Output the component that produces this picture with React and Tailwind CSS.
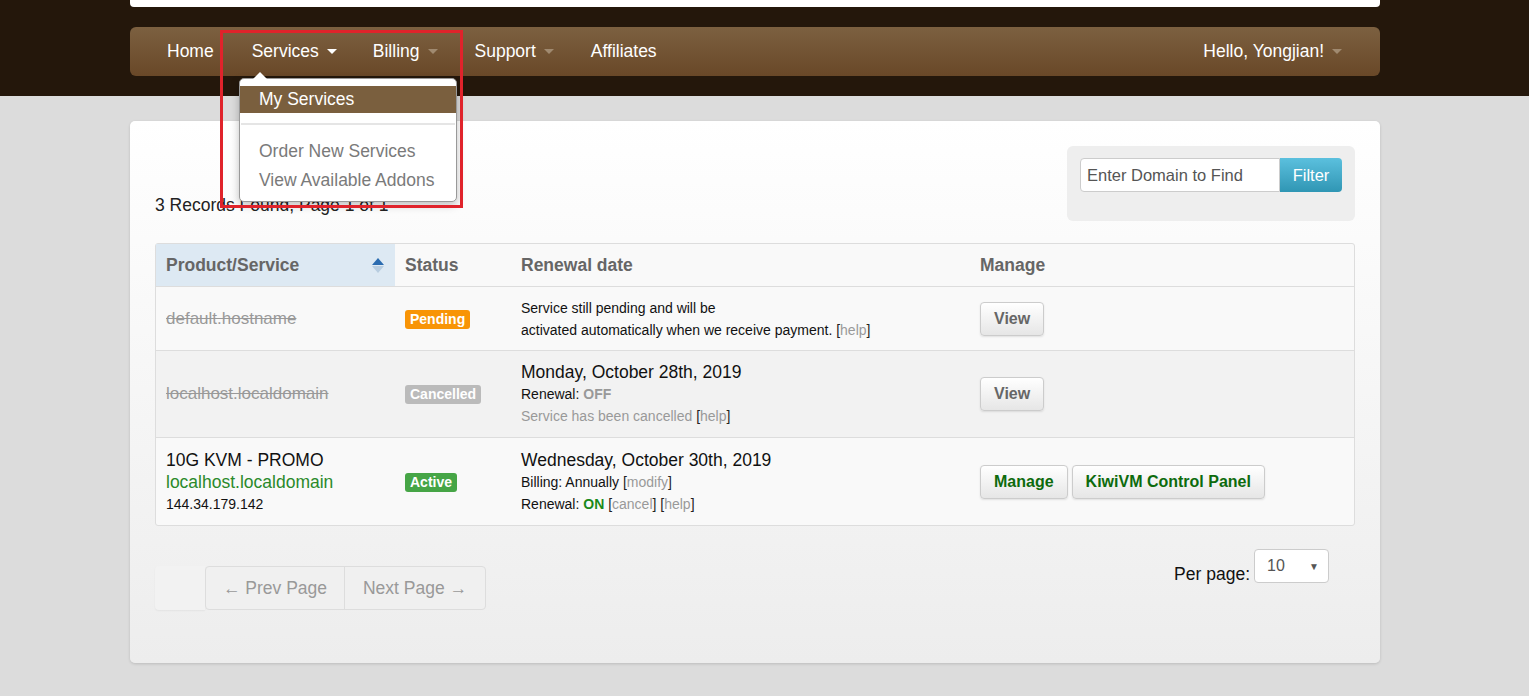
import React from "react";

const Caret = ({ className = "" }) => (
  <span className={`inline-block ml-[8px] align-middle w-0 h-0 border-l-[5px] border-r-[5px] border-t-[5px] border-l-transparent border-r-transparent ${className}`} />
);

function NavBar() {
  return (
    <div className="relative ml-[130px] w-[1250px] h-[49px] rounded-[6px] bg-gradient-to-b from-[#7c6040] to-[#694828] flex items-center justify-between text-[17.5px] text-white">
      <div className="flex items-center h-full">
        <a className="pl-[37px] pr-[20px]">Home</a>
        <a className="px-[18px] flex items-center">
          Services <Caret className="border-t-white" />
        </a>
        <a className="px-[18px] flex items-center">
          Billing <Caret className="border-t-[#a08a70]" />
        </a>
        <a className="pl-[19px] pr-[18px] flex items-center">
          Support <Caret className="border-t-[#a08a70]" />
        </a>
        <a className="pl-[19px] pr-[18px]">Affiliates</a>
      </div>
      <a className="pr-[38px] flex items-center">
        Hello, Yongjian! <Caret className="border-t-[#a08a70]" />
      </a>

      {/* dropdown */}
      <div className="absolute left-[109px] top-[51px] w-[218px] z-20 bg-white rounded-[5px] border border-[#999] shadow-[0_3px_8px_rgba(0,0,0,0.25)] pt-[7px] pb-[6px]">
        <div className="absolute -top-[7px] left-[13px] w-0 h-0 border-l-[7px] border-r-[7px] border-b-[7px] border-l-transparent border-r-transparent border-b-white" />
        <div className="h-[27px] bg-[#7a5f3e] text-white px-[19px] flex items-center">My Services</div>
        <div className="mt-[10px] h-[2px] bg-[#e5e5e5] mx-[1px]" />
        <div className="pt-[12px] text-[#7a7a7a] px-[19px] leading-[29px]">
          <div>Order New Services</div>
          <div>View Available Addons</div>
        </div>
      </div>
      {/* red highlight box */}
      <div className="absolute left-[90px] top-[3px] w-[243px] h-[178px] border-[3px] border-[#e0232b] z-30 pointer-events-none" />
    </div>
  );
}

const LinkBr = ({ children }) => (
  <span className="text-[#222]">[<span className="text-[#999]">{children}</span>]</span>
);

const Btn = ({ children, green }) => (
  <button
    className={`h-[34px] px-[13px] rounded-[4px] border border-[#ccc] bg-gradient-to-b from-white to-[#e6e6e6] shadow-[0_1px_2px_rgba(0,0,0,0.1)] text-[16px] font-bold ${
      green ? "text-[#0d6b0d]" : "text-[#666]"
    }`}
  >
    {children}
  </button>
);

const Badge = ({ children, color }) => (
  <span className={`inline-block px-[5px] h-[19px] leading-[19px] rounded-[3px] text-[14px] font-bold text-white ${color}`}>
    {children}
  </span>
);

const cols = "grid grid-cols-[239px_116px_458px_1fr]";

export default function App() {
  return (
    <div className="min-h-[696px] bg-[#dcdcdc] font-['Liberation_Sans',Arial,sans-serif]">
      <div className="bg-[#24170b] h-[96px]">
        <div className="ml-[130px] w-[1250px] h-[7px] bg-white rounded-b-[4px] mb-[20px]" />
        <NavBar />
      </div>

      <div className="ml-[130px] w-[1250px] mt-[25px] h-[542px] rounded-[5px] bg-gradient-to-b from-white to-[#ededed] shadow-[0_1px_3px_rgba(0,0,0,0.15)] px-[25px] pt-[25px]">
        <div className="flex justify-between items-start">
          <div className="pt-[46px] text-[17.5px] text-[#222]">
            3 Records Found, Page 1 of 1
          </div>
          <div className="w-[288px] h-[75px] bg-[#eeeeee] rounded-[6px] px-[13px] pt-[12px]">
            <div className="flex">
              <div className="w-[200px] h-[34px] bg-white border border-[#ccc] rounded-l-[4px] px-[6px] flex items-center text-[16.5px] text-[#555]">
                Enter Domain to Find
              </div>
              <button className="w-[62px] h-[34px] rounded-r-[4px] bg-gradient-to-b from-[#5bc0de] to-[#2f96b4] text-white text-[16.5px]">
                Filter
              </button>
            </div>
          </div>
        </div>

        <div className="mt-[22px] border border-[#ddd] rounded-[3px] bg-[#f9f9f9]">
          <div className={`${cols} h-[43px] text-[17.5px] font-bold text-[#666] border-b border-[#ddd] items-stretch`}>
            <div className="bg-[#dde9f3] pl-[10px] pr-[11px] flex items-center justify-between">
              <span>Product/Service</span>
              <span className="flex flex-col items-center gap-[1px]">
                <span className="w-0 h-0 border-l-[6px] border-r-[6px] border-b-[7px] border-l-transparent border-r-transparent border-b-[#2b6cb0]" />
                <span className="w-0 h-0 border-l-[6px] border-r-[6px] border-t-[7px] border-l-transparent border-r-transparent border-t-[#b8cde0]" />
              </span>
            </div>
            <div className="pl-[10px] flex items-center">Status</div>
            <div className="pl-[10px] flex items-center">Renewal date</div>
            <div className="pl-[11px] flex items-center">Manage</div>
          </div>

          {/* row 1 */}
          <div className={`${cols} h-[64px] border-b border-[#ddd] items-center`}>
            <div className="pl-[10px] text-[17px] text-[#999] line-through">default.hostname</div>
            <div className="pl-[10px]"><Badge color="bg-[#f89406]">Pending</Badge></div>
            <div className="pl-[10px] text-[14px] text-[#111] leading-[22px]">
              Service still pending and will be<br />
              activated automatically when we receive payment. <LinkBr>help</LinkBr>
            </div>
            <div className="pl-[11px]"><Btn>View</Btn></div>
          </div>

          {/* row 2 */}
          <div className={`${cols} h-[87px] border-b border-[#ddd] items-center bg-[#f2f2f2]`}>
            <div className="pl-[10px] text-[17px] text-[#999] line-through">localhost.localdomain</div>
            <div className="pl-[10px]"><Badge color="bg-[#bbbbbb]">Cancelled</Badge></div>
            <div className="pl-[10px] text-[14px] text-[#111] leading-[22px]">
              <div className="text-[17.5px] leading-[22px]">Monday, October 28th, 2019</div>
              <div>Renewal: <b className="text-[#999]">OFF</b></div>
              <div><span className="text-[#999]">Service has been cancelled</span> <LinkBr>help</LinkBr></div>
            </div>
            <div className="pl-[11px]"><Btn>View</Btn></div>
          </div>

          {/* row 3 */}
          <div className={`${cols} h-[87px] items-center`}>
            <div className="pl-[10px] text-[#111]">
              <div className="text-[17.5px] leading-[22px]">10G KVM - PROMO</div>
              <div className="text-[17.5px] leading-[22px] text-[#2a8a2a]">localhost.localdomain</div>
              <div className="text-[14px] leading-[22px]">144.34.179.142</div>
            </div>
            <div className="pl-[10px]"><Badge color="bg-[#46a546]">Active</Badge></div>
            <div className="pl-[10px] text-[14px] text-[#111] leading-[22px]">
              <div className="text-[17.5px] leading-[22px]">Wednesday, October 30th, 2019</div>
              <div>Billing: Annually <LinkBr>modify</LinkBr></div>
              <div>Renewal: <b className="text-[#1a8a1a]">ON</b> <LinkBr>cancel</LinkBr> <LinkBr>help</LinkBr></div>
            </div>
            <div className="pl-[11px] flex gap-[4px]">
              <Btn green>Manage</Btn>
              <Btn green>KiwiVM Control Panel</Btn>
            </div>
          </div>
        </div>

        <div className="flex justify-between mt-[23px]">
          <div className="pt-[17px] flex">
            <div className="w-[50px] h-[44px] rounded-l-[4px] bg-[#f2f2f2] shadow-[0_1px_2px_rgba(0,0,0,0.05)]" />
            <div className="flex h-[44px] border border-[#ddd] rounded-[4px] text-[17.5px] text-[#999] bg-[#f0f0f0]">
              <div className="w-[139px] flex items-center justify-center border-r border-[#ddd]">← Prev Page</div>
              <div className="w-[140px] flex items-center justify-center">Next Page →</div>
            </div>
          </div>
          <div className="flex items-start pr-[26px]">
            <span className="text-[17.5px] text-[#111] mt-[12px] mr-[4px]">Per page:</span>
            <div className="w-[75px] h-[34px] bg-white border border-[#ccc] rounded-[4px] flex items-center justify-between pl-[12px] pr-[9px] text-[16px] text-[#555]">
              <span>10</span>
              <span className="text-[10px] text-[#555]">▼</span>
            </div>
          </div>
        </div>
      </div>
    </div>
  );
}
